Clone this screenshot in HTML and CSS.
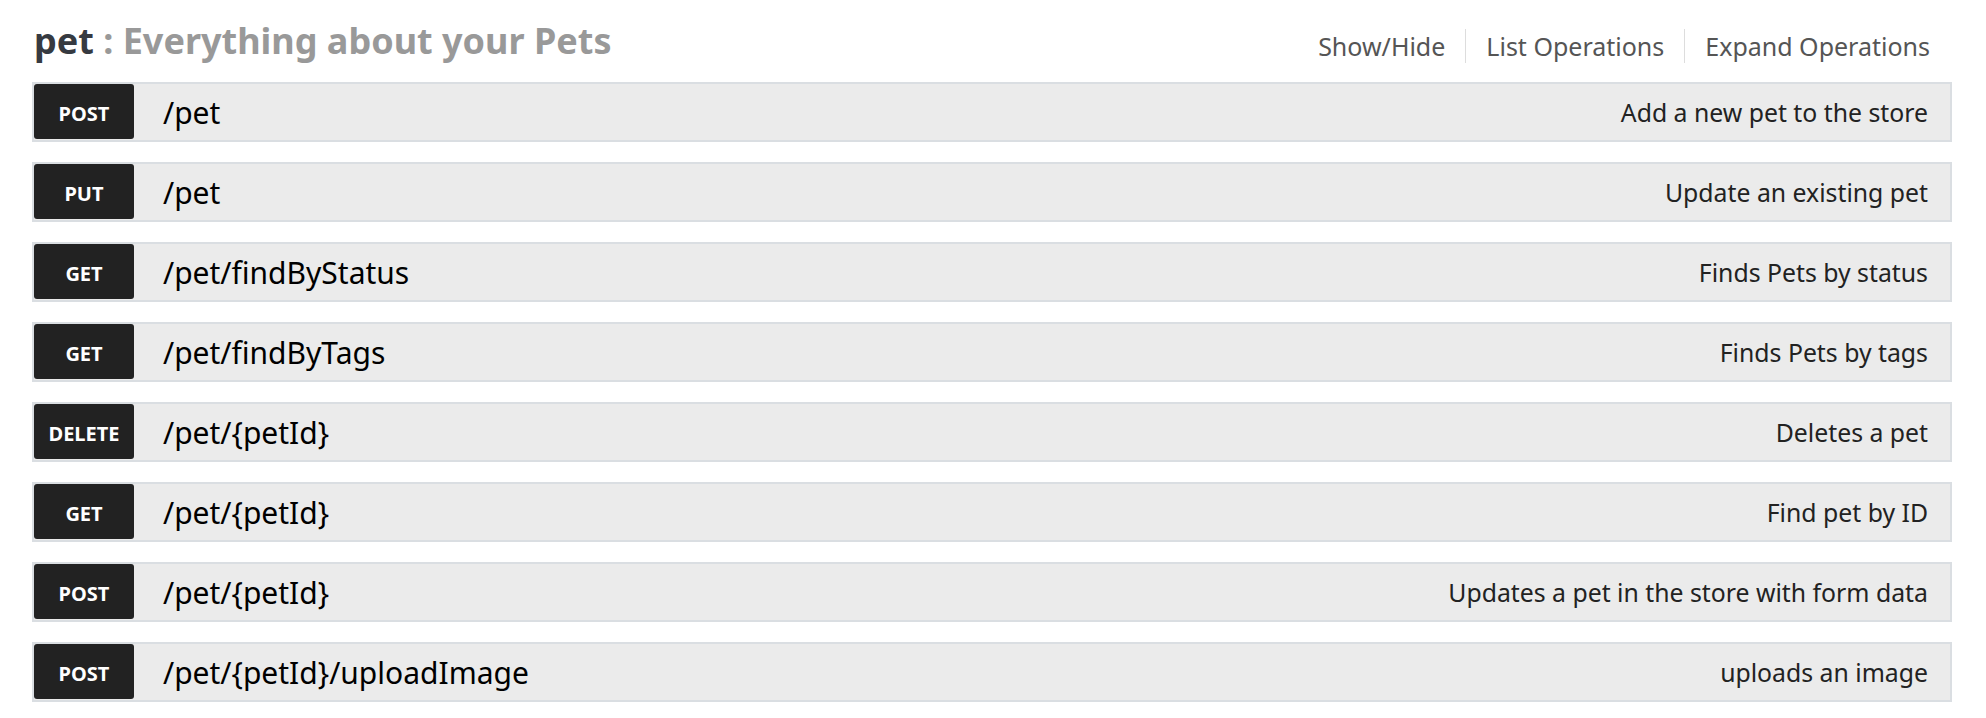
FILE: index.html
```html
<!DOCTYPE html>
<html>
<head>
<meta charset="utf-8">
<link rel="stylesheet" href="styles.css">
</head>
<body>
<div class="resource">
  <div class="heading">
    <h2 class="title"><span class="name">pet</span> : Everything about your Pets</h2>
    <ul class="options">
      <li>Show/Hide</li>
      <li>List Operations</li>
      <li>Expand Operations</li>
    </ul>
  </div>
  <ul class="endpoints">
    <li class="op"><span class="method">POST</span><span class="path">/pet</span><span class="summary">Add a new pet to the store</span></li>
    <li class="op"><span class="method">PUT</span><span class="path">/pet</span><span class="summary">Update an existing pet</span></li>
    <li class="op"><span class="method">GET</span><span class="path">/pet/findByStatus</span><span class="summary">Finds Pets by status</span></li>
    <li class="op"><span class="method">GET</span><span class="path">/pet/findByTags</span><span class="summary">Finds Pets by tags</span></li>
    <li class="op"><span class="method">DELETE</span><span class="path">/pet/{petId}</span><span class="summary">Deletes a pet</span></li>
    <li class="op"><span class="method">GET</span><span class="path">/pet/{petId}</span><span class="summary">Find pet by ID</span></li>
    <li class="op"><span class="method">POST</span><span class="path">/pet/{petId}</span><span class="summary">Updates a pet in the store with form data</span></li>
    <li class="op"><span class="method">POST</span><span class="path">/pet/{petId}/uploadImage</span><span class="summary">uploads an image</span></li>
  </ul>
</div>
</body>
</html>
```
FILE: styles.css
```css
html, body {
  margin: 0;
  padding: 0;
  background: #fff;
}
body {
  font-family: "Noto Sans", "Open Sans", "DejaVu Sans", sans-serif;
}
.resource {
  padding: 0 34px 0 32px;
}
.heading {
  display: flex;
  justify-content: space-between;
  align-items: flex-start;
  height: 82px;
}
.title {
  margin: 0;
  padding: 21px 0 0 2px;
  font-size: 36px;
  line-height: 40px;
  font-weight: 700;
  color: #999;
}
.name {
  color: #363a41;
}
.options {
  list-style: none;
  margin: 0;
  padding: 29px 22px 0 0;
  display: flex;
}
.options li {
  font-size: 25px;
  line-height: 34px;
  color: #555;
  padding: 0 20px;
  border-left: 1px solid #ddd;
}
.options li:first-child {
  border-left: none;
}
.options li:last-child {
  padding-right: 0;
}
.endpoints {
  list-style: none;
  margin: 0;
  padding: 0;
}
.op {
  display: flex;
  align-items: center;
  height: 56px;
  background: #ebebeb;
  border: 2px solid #dadee2;
  margin-bottom: 20px;
}
.method {
  width: 100px;
  height: 55px;
  align-self: flex-start;
  background: #222;
  color: #fff;
  border-radius: 3px;
  font-size: 20px;
  font-weight: 700;
  display: flex;
  align-items: center;
  justify-content: center;
  padding-top: 3px;
  box-sizing: border-box;
}
.path {
  margin-left: 29px;
  font-size: 30px;
  color: #000;
  flex: 1;
}
.summary {
  font-size: 24.8px;
  color: #222;
  padding-right: 22px;
}
```
